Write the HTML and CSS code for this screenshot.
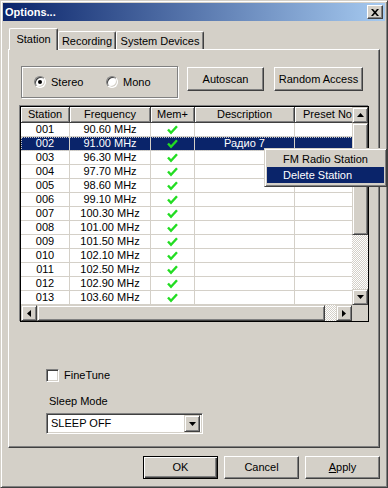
FILE: index.html
```html
<!DOCTYPE html>
<html>
<head>
<meta charset="utf-8">
<link rel="stylesheet" href="styles.css">
</head>
<body>
<div class="window">
  <div class="titlebar">
    <span class="title">Options...</span>
    <span class="close-btn"><svg width="8" height="7" viewBox="0 0 8 7"><path d="M0 0H2L4 2.3L6 0H8L5.1 3.5L8 7H6L4 4.7L2 7H0L2.9 3.5Z" fill="#000"/></svg></span>
  </div>
  <div class="tabs">
    <div class="tab tab-station active">Station</div>
    <div class="tab tab-recording">Recording</div>
    <div class="tab tab-devices">System Devices</div>
  </div>
  <div class="panel">
    <div class="top-row">
      <div class="groupbox">
        <div class="radio radio-stereo"><span class="radio-circle checked"></span><span>Stereo</span></div>
        <div class="radio"><span class="radio-circle"></span><span>Mono</span></div>
      </div>
      <div class="btn btn-autoscan">Autoscan</div>
      <div class="btn btn-random">Random Access</div>
    </div>
    <div class="listview">
      <div class="table">
        <div class="hrow">
          <div class="hcell">Station</div>
          <div class="hcell">Frequency</div>
          <div class="hcell">Mem+</div>
          <div class="hcell">Description</div>
          <div class="hcell">Preset No</div>
        </div>
        <div class="row"><div class="cell">001</div><div class="cell">90.60 MHz</div><div class="cell"><svg class="chk" width="11" height="10" viewBox="0 0 11 10"><path d="M1 4.5L4 7.8L10 1.2" fill="none" stroke="#22dd22" stroke-width="2.4"/></svg></div><div class="cell"></div><div class="cell"></div></div>
        <div class="row sel"><div class="cell">002</div><div class="cell">91.00 MHz</div><div class="cell"><svg class="chk" width="11" height="10" viewBox="0 0 11 10"><path d="M1 4.5L4 7.8L10 1.2" fill="none" stroke="#22dd22" stroke-width="2.4"/></svg></div><div class="cell">Радио 7</div><div class="cell"></div></div>
        <div class="row"><div class="cell">003</div><div class="cell">96.30 MHz</div><div class="cell"><svg class="chk" width="11" height="10" viewBox="0 0 11 10"><path d="M1 4.5L4 7.8L10 1.2" fill="none" stroke="#22dd22" stroke-width="2.4"/></svg></div><div class="cell"></div><div class="cell"></div></div>
        <div class="row"><div class="cell">004</div><div class="cell">97.70 MHz</div><div class="cell"><svg class="chk" width="11" height="10" viewBox="0 0 11 10"><path d="M1 4.5L4 7.8L10 1.2" fill="none" stroke="#22dd22" stroke-width="2.4"/></svg></div><div class="cell"></div><div class="cell"></div></div>
        <div class="row"><div class="cell">005</div><div class="cell">98.60 MHz</div><div class="cell"><svg class="chk" width="11" height="10" viewBox="0 0 11 10"><path d="M1 4.5L4 7.8L10 1.2" fill="none" stroke="#22dd22" stroke-width="2.4"/></svg></div><div class="cell"></div><div class="cell"></div></div>
        <div class="row"><div class="cell">006</div><div class="cell">99.10 MHz</div><div class="cell"><svg class="chk" width="11" height="10" viewBox="0 0 11 10"><path d="M1 4.5L4 7.8L10 1.2" fill="none" stroke="#22dd22" stroke-width="2.4"/></svg></div><div class="cell"></div><div class="cell"></div></div>
        <div class="row"><div class="cell">007</div><div class="cell">100.30 MHz</div><div class="cell"><svg class="chk" width="11" height="10" viewBox="0 0 11 10"><path d="M1 4.5L4 7.8L10 1.2" fill="none" stroke="#22dd22" stroke-width="2.4"/></svg></div><div class="cell"></div><div class="cell"></div></div>
        <div class="row"><div class="cell">008</div><div class="cell">101.00 MHz</div><div class="cell"><svg class="chk" width="11" height="10" viewBox="0 0 11 10"><path d="M1 4.5L4 7.8L10 1.2" fill="none" stroke="#22dd22" stroke-width="2.4"/></svg></div><div class="cell"></div><div class="cell"></div></div>
        <div class="row"><div class="cell">009</div><div class="cell">101.50 MHz</div><div class="cell"><svg class="chk" width="11" height="10" viewBox="0 0 11 10"><path d="M1 4.5L4 7.8L10 1.2" fill="none" stroke="#22dd22" stroke-width="2.4"/></svg></div><div class="cell"></div><div class="cell"></div></div>
        <div class="row"><div class="cell">010</div><div class="cell">102.10 MHz</div><div class="cell"><svg class="chk" width="11" height="10" viewBox="0 0 11 10"><path d="M1 4.5L4 7.8L10 1.2" fill="none" stroke="#22dd22" stroke-width="2.4"/></svg></div><div class="cell"></div><div class="cell"></div></div>
        <div class="row"><div class="cell">011</div><div class="cell">102.50 MHz</div><div class="cell"><svg class="chk" width="11" height="10" viewBox="0 0 11 10"><path d="M1 4.5L4 7.8L10 1.2" fill="none" stroke="#22dd22" stroke-width="2.4"/></svg></div><div class="cell"></div><div class="cell"></div></div>
        <div class="row"><div class="cell">012</div><div class="cell">102.90 MHz</div><div class="cell"><svg class="chk" width="11" height="10" viewBox="0 0 11 10"><path d="M1 4.5L4 7.8L10 1.2" fill="none" stroke="#22dd22" stroke-width="2.4"/></svg></div><div class="cell"></div><div class="cell"></div></div>
        <div class="row"><div class="cell">013</div><div class="cell">103.60 MHz</div><div class="cell"><svg class="chk" width="11" height="10" viewBox="0 0 11 10"><path d="M1 4.5L4 7.8L10 1.2" fill="none" stroke="#22dd22" stroke-width="2.4"/></svg></div><div class="cell"></div><div class="cell"></div></div>
      </div>
      <div class="vscroll">
        <div class="sbtn"><svg width="7" height="4" viewBox="0 0 7 4"><path d="M3.5 0L7 4H0Z" fill="#000"/></svg></div>
        <div class="sthumb vthumb"></div>
        <div class="strack"></div>
        <div class="sbtn"><svg width="7" height="4" viewBox="0 0 7 4"><path d="M0 0H7L3.5 4Z" fill="#000"/></svg></div>
      </div>
      <div class="hscroll">
        <div class="sbtn"><svg width="4" height="7" viewBox="0 0 4 7"><path d="M4 0V7L0 3.5Z" fill="#000"/></svg></div>
        <div class="sthumb hthumb"></div>
        <div class="strack"></div>
        <div class="sbtn"><svg width="4" height="7" viewBox="0 0 4 7"><path d="M0 0L4 3.5L0 7Z" fill="#000"/></svg></div>
      </div>
      <div class="corner"></div>
    </div>
    <div class="check-row">
      <span class="check-box"></span><span>FineTune</span>
    </div>
    <div class="sleep-label">Sleep Mode</div>
    <div class="combo">
      <span class="combo-text">SLEEP OFF</span>
      <span class="combo-btn"><svg width="7" height="4" viewBox="0 0 7 4"><path d="M0 0H7L3.5 4Z" fill="#000"/></svg></span>
    </div>
  </div>
  <div class="buttons">
    <div class="btn dbtn default">OK</div>
    <div class="btn dbtn">Cancel</div>
    <div class="btn dbtn"><span><u>A</u>pply</span></div>
  </div>
  <div class="menu">
    <div class="mi">FM Radio Station</div>
    <div class="mi hl">Delete Station</div>
  </div>
</div>
</body>
</html>
```

FILE: styles.css
```css
* { box-sizing: border-box; }
html, body { margin: 0; padding: 0; }
body {
  width: 388px;
  height: 488px;
  overflow: hidden;
  background: #d4d0c8;
  font-family: "Liberation Sans", Arial, sans-serif;
  font-size: 11px;
  color: #000;
}
.window {
  position: relative;
  width: 388px;
  height: 488px;
  background: #d4d0c8;
  border: 1px solid;
  border-color: #d4d0c8 #404040 #404040 #d4d0c8;
  box-shadow: inset 1px 1px #fff, inset -1px -1px #808080;
  padding: 2px;
}
.titlebar {
  height: 18px;
  display: flex;
  align-items: center;
  justify-content: space-between;
  padding: 0 2px 0 2px;
  background: linear-gradient(to right, #0a246a, #a6caf0);
}
.title {
  color: #fff;
  font-weight: bold;
  line-height: 13px;
}
.close-btn {
  width: 16px;
  height: 14px;
  display: flex;
  align-items: center;
  justify-content: center;
  background: #d4d0c8;
  border: 1px solid;
  border-color: #fff #404040 #404040 #fff;
  box-shadow: inset -1px -1px #808080;
}
.tabs {
  display: flex;
  align-items: flex-end;
  height: 21px;
  margin-top: 7px;
  padding-left: 6px;
}
.tab {
  height: 18px;
  border: 1px solid;
  border-bottom: none;
  border-color: #fff #404040 #fff #fff;
  border-radius: 2px 2px 0 0;
  box-shadow: inset -1px 0 #808080;
  display: flex;
  align-items: center;
  justify-content: center;
  padding-top: 1px;
  line-height: 13px;
  background: #d4d0c8;
  white-space: nowrap;
}
.tab.active {
  height: 22px;
  margin-bottom: -1px;
  padding-top: 0;
  position: relative;
  z-index: 1;
}
.tab-station { width: 49px; }
.tab-recording { width: 58px; }
.tab-devices { width: 88px; }
.panel {
  margin: 0 5px;
  height: 399px;
  border: 1px solid;
  border-color: #fff #404040 #404040 #fff;
  box-shadow: inset -1px -1px #808080;
}
.top-row {
  display: flex;
  align-items: flex-start;
  margin: 16px 0 0 12px;
}
.groupbox {
  width: 157px;
  height: 32px;
  border: 1px solid #808080;
  box-shadow: inset 1px 1px #fff, 1px 1px 0 #fff;
  display: flex;
  align-items: center;
  padding-left: 12px;
}
.radio {
  display: flex;
  align-items: center;
  gap: 5px;
  line-height: 13px;
}
.radio-stereo { width: 72px; }
.radio-circle {
  position: relative;
  width: 12px;
  height: 12px;
  border-radius: 50%;
  background: #fff;
  border: 1px solid;
  border-color: #808080 #fff #fff #808080;
  box-shadow: inset 1px 1px #404040, inset -1px -1px #d4d0c8;
}
.radio-circle.checked::after {
  content: "";
  position: absolute;
  left: 3px;
  top: 3px;
  width: 4px;
  height: 4px;
  border-radius: 50%;
  background: #000;
}
.btn {
  height: 24px;
  display: flex;
  align-items: center;
  justify-content: center;
  background: #d4d0c8;
  border: 1px solid;
  border-color: #fff #404040 #404040 #fff;
  box-shadow: inset -1px -1px #808080;
  line-height: 13px;
  white-space: nowrap;
}
.btn-autoscan { width: 77px; margin: 1px 0 0 9px; }
.btn-random { width: 89px; margin: 1px 0 0 10px; }
.listview {
  margin: 8px 0 0 11px;
  width: 349px;
  height: 216px;
  border: 1px solid #000;
  box-shadow: -1px -1px 0 #808080;
  display: grid;
  grid-template-columns: 331px 16px;
  grid-template-rows: 198px 16px;
  background: #fff;
}
.table { overflow: hidden; }
.hrow, .row {
  display: grid;
  grid-template-columns: 49px 81px 44px 100px 66px;
  width: 340px;
}
.hrow { height: 16px; }
.hcell {
  background: #d4d0c8;
  border-right: 1px solid #404040;
  border-bottom: 1px solid #404040;
  box-shadow: inset 1px 1px #fff, inset -1px -1px #808080;
  text-align: center;
  line-height: 15px;
  white-space: nowrap;
  overflow: hidden;
}
.row { height: 14px; }
.cell {
  border-right: 1px solid #d4d0c8;
  border-bottom: 1px solid #d4d0c8;
  display: flex;
  align-items: center;
  justify-content: center;
  line-height: 13px;
  white-space: nowrap;
  overflow: hidden;
}
.row.sel {
  background: #0a246a;
  color: #fff;
  outline: 1px dotted #c8c8c8;
  outline-offset: -1px;
}
.chk { display: block; }
.vscroll {
  display: flex;
  flex-direction: column;
}
.hscroll {
  display: flex;
}
.sbtn {
  width: 16px;
  height: 16px;
  flex: none;
  display: flex;
  align-items: center;
  justify-content: center;
  background: #d4d0c8;
  border: 1px solid;
  border-color: #d4d0c8 #404040 #404040 #d4d0c8;
  box-shadow: inset 1px 1px #fff, inset -1px -1px #808080;
}
.sthumb {
  flex: none;
  background: #d4d0c8;
  border: 1px solid;
  border-color: #d4d0c8 #404040 #404040 #d4d0c8;
  box-shadow: inset 1px 1px #fff, inset -1px -1px #808080;
}
.vthumb { height: 112px; }
.hthumb { width: 288px; }
.strack {
  flex: 1;
  background: repeating-conic-gradient(#fff 0 25%, #d4d0c8 0 50%) 0 0 / 2px 2px;
}
.corner { background: #d4d0c8; }
.check-row {
  display: flex;
  align-items: center;
  gap: 5px;
  margin: 47px 0 0 37px;
  height: 13px;
  line-height: 13px;
}
.check-box {
  width: 13px;
  height: 13px;
  background: #fff;
  border: 1px solid;
  border-color: #808080 #fff #fff #808080;
  box-shadow: inset 1px 1px #404040, inset -1px -1px #d4d0c8;
}
.sleep-label {
  margin: 13px 0 0 40px;
  line-height: 13px;
}
.combo {
  margin: 5px 0 0 37px;
  width: 157px;
  height: 21px;
  background: #fff;
  border: 1px solid;
  border-color: #808080 #fff #fff #808080;
  box-shadow: inset 1px 1px #404040, inset -1px -1px #d4d0c8;
  padding: 2px 2px 2px 4px;
  display: flex;
  align-items: center;
  justify-content: space-between;
}
.combo-text { line-height: 13px; }
.combo-btn {
  width: 16px;
  height: 17px;
  display: flex;
  align-items: center;
  justify-content: center;
  background: #d4d0c8;
  border: 1px solid;
  border-color: #d4d0c8 #404040 #404040 #d4d0c8;
  box-shadow: inset 1px 1px #fff, inset -1px -1px #808080;
}
.buttons {
  display: flex;
  justify-content: flex-end;
  gap: 6px;
  margin: 8px 5px 0 0;
}
.dbtn { width: 75px; height: 23px; }
.btn.default {
  border-color: #000;
  box-shadow: inset 1px 1px #fff, inset -1px -1px #404040, inset -2px -2px #808080;
}
.menu {
  position: absolute;
  left: 263px;
  top: 147px;
  width: 123px;
  height: 39px;
  background: #d4d0c8;
  border: 1px solid;
  border-color: #d4d0c8 #404040 #404040 #d4d0c8;
  box-shadow: inset 1px 1px #fff, inset -1px -1px #808080;
  padding: 2px;
  z-index: 5;
}
.mi {
  height: 16px;
  line-height: 16px;
  padding-left: 16px;
  white-space: nowrap;
}
.mi.hl {
  background: #0a246a;
  color: #fff;
}
```
